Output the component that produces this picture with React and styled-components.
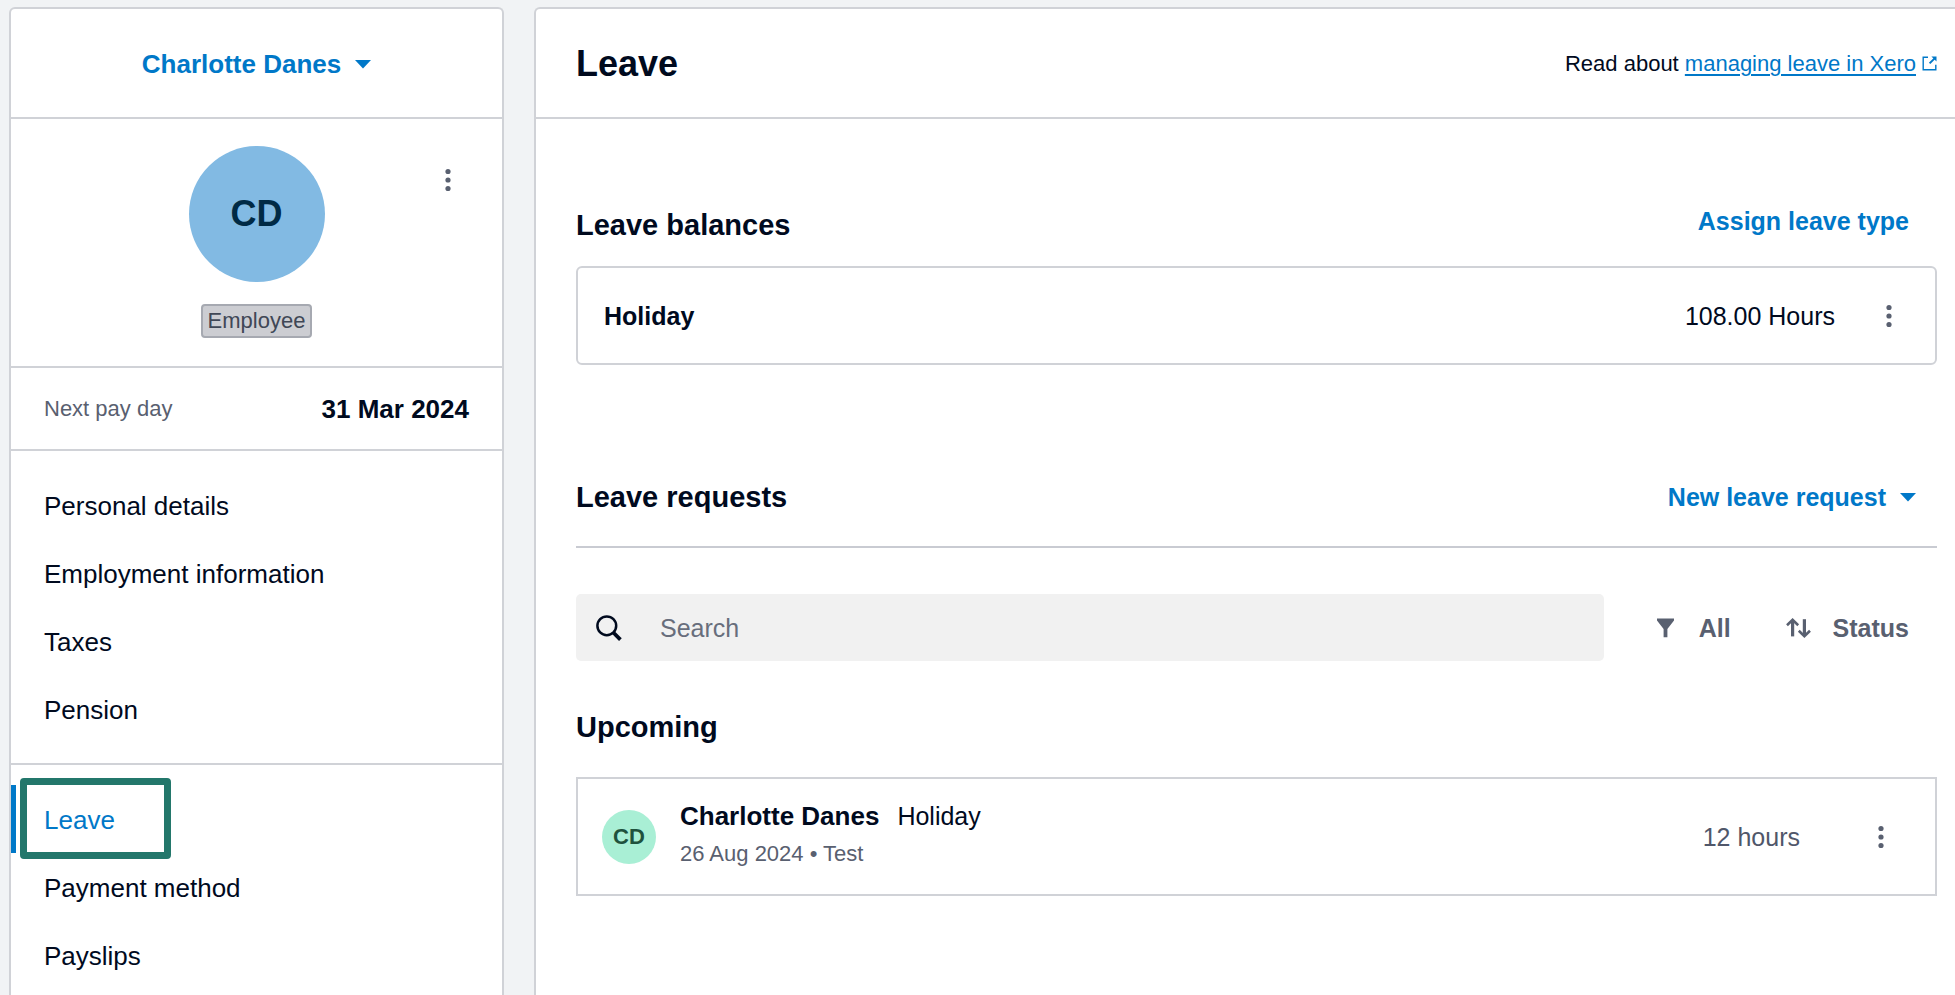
import React from "react";
import styled, { createGlobalStyle, css } from "styled-components";

const color = {
  page: "#f1f3f5",
  ink: "#000a1e",
  muted: "#596070",
  blue: "#0078c8",
  line: "#d0d2d7",
  rule: "#c9cbd2",
  highlight: "#23776b",
};

const GlobalStyle = createGlobalStyle`
  *, *::before, *::after { box-sizing: border-box; }
  body {
    margin: 0;
    background: ${color.page};
    color: ${color.ink};
    font-family: "Liberation Sans", Arial, sans-serif;
    font-size: 26px;
    line-height: 36px;
  }
  h1, h2, p, dl, dd, ul { margin: 0; padding: 0; }
  button, input { font: inherit; color: inherit; }
`;

const Page = styled.div`
  display: flex;
  gap: 30px;
  min-height: 100vh;
  padding: 7px 0 0 9px;
`;

const panel = css`
  background: #fff;
  border: 2px solid ${color.line};
  border-bottom: 0;
`;

const Sidebar = styled.aside`
  ${panel}
  flex: 0 0 495px;
  border-radius: 6px 6px 0 0;
`;

const Main = styled.main`
  ${panel}
  flex: 1;
  min-width: 0;
  border-right: 0;
  border-radius: 6px 0 0 0;
`;

const PanelHeader = styled.header`
  display: flex;
  align-items: center;
  justify-content: ${(p) => (p.$centered ? "center" : "space-between")};
  min-height: 110px;
  padding: ${(p) => (p.$centered ? "2px 0 0" : "2px 18px 0 40px")};
  border-bottom: 2px solid ${color.line};
`;

const PlainButton = styled.button`
  display: inline-flex;
  align-items: center;
  padding: 0;
  border: 0;
  background: none;
  cursor: pointer;
`;

const TextButton = styled(PlainButton)`
  gap: 14px;
  color: ${color.blue};
  font-weight: 700;
  line-height: 32px;
`;

const FilterButton = styled(PlainButton)`
  gap: ${(p) => (p.$wide ? 25 : 22)}px;
  color: ${color.muted};
  font-size: 25px;
  font-weight: 700;
`;

const IconButton = styled(PlainButton)`
  justify-content: center;
  width: 48px;
  height: 48px;
  color: ${color.muted};
`;

const Profile = styled.section`
  display: grid;
  grid-template-columns: 1fr auto 1fr;
  row-gap: 22px;
  padding: 27px 30px 28px;
  border-bottom: 2px solid ${color.line};

  ${IconButton} {
    justify-self: end;
    margin-top: 10px;
  }
`;

const Avatar = styled.div`
  grid-column: ${(p) => (p.$large ? "2" : "auto")};
  display: flex;
  align-items: center;
  justify-content: center;
  flex: none;
  width: ${(p) => (p.$large ? 136 : 54)}px;
  height: ${(p) => (p.$large ? 136 : 54)}px;
  border-radius: 50%;
  background: ${(p) => (p.$large ? "#82bae3" : "#a9efd5")};
  color: ${(p) => (p.$large ? "#002a45" : "#1f523d")};
  font-size: ${(p) => (p.$large ? 36 : 22)}px;
  font-weight: 700;
`;

const Badge = styled.span`
  grid-column: 2;
  justify-self: center;
  padding: 0 5px;
  border: 2px solid #a6a9b1;
  border-radius: 4px;
  background: #cccdd2;
  color: #404756;
  font-size: 22px;
  line-height: 30px;
`;

const PayDay = styled.dl`
  display: flex;
  align-items: center;
  justify-content: space-between;
  min-height: 83px;
  padding: 0 33px;
  border-bottom: 2px solid ${color.line};

  dt { color: ${color.muted}; font-size: 22px; }
  dd { font-weight: 700; }
`;

const NavGroup = styled.ul`
  padding: 20px 0;
  list-style: none;

  & + & { border-top: 2px solid ${color.line}; }
`;

const NavItem = styled.li`
  position: relative;
`;

const NavLink = styled.a`
  display: block;
  padding: 17px 28px 15px;
  border-left: 5px solid ${(p) => (p.$current ? color.blue : "transparent")};
  color: ${(p) => (p.$current ? color.blue : color.ink)};
  text-decoration: none;
`;

const Callout = styled.span`
  position: absolute;
  top: -7px;
  left: 9px;
  width: 151px;
  height: 81px;
  border: 7px solid ${color.highlight};
  border-radius: 4px;
  pointer-events: none;
`;

const Title = styled.h1`
  font-size: 36px;
  line-height: 40px;
`;

const HelpText = styled.p`
  font-size: 22px;
`;

const HelpLink = styled.a`
  color: ${color.blue};
  text-decoration-thickness: 2px;
  text-underline-offset: 3px;

  & + svg { margin-left: 6px; color: ${color.blue}; }
`;

const Content = styled.div`
  padding: 86px 18px 40px 40px;
`;

const Heading = styled.h2`
  font-size: 29px;
  line-height: 40px;
`;

const SectionHeader = styled.div`
  display: flex;
  justify-content: space-between;
  align-items: ${(p) => (p.$ruled ? "center" : "flex-start")};
  padding: ${(p) => (p.$ruled ? "0 21px 29px 0" : "0 28px 21px 0")};
  border-bottom: ${(p) => (p.$ruled ? `2px solid ${color.rule}` : "0")};

  ${TextButton} { font-size: 25px; }
`;

const BalanceCard = styled.div`
  display: flex;
  align-items: center;
  gap: 30px;
  min-height: 99px;
  margin-bottom: 112px;
  padding: 0 22px 0 26px;
  border: 2px solid ${color.line};
  border-radius: 6px;
  font-size: 25px;
`;

const BalanceName = styled.strong`
  flex: 1;
`;

const Toolbar = styled.div`
  display: flex;
  align-items: center;
  gap: 53px;
  margin: 46px 0;
  padding-right: 28px;
`;

const Filters = styled.div`
  display: flex;
  gap: 55px;
`;

const SearchBox = styled.label`
  display: flex;
  align-items: center;
  gap: 38px;
  flex: 1;
  min-width: 0;
  height: 67px;
  padding: 0 20px;
  border-radius: 5px;
  background: #f1f1f1;
  font-size: 25px;
`;

const SearchInput = styled.input`
  flex: 1;
  min-width: 0;
  padding: 0;
  border: 0;
  outline: 0;
  background: none;

  &::placeholder { color: #686e7c; opacity: 1; }
`;

const RequestCard = styled.article`
  display: flex;
  align-items: center;
  min-height: 119px;
  margin-top: 30px;
  padding: 0 30px 0 24px;
  border: 2px solid ${color.line};
`;

const RequestInfo = styled.div`
  flex: 1;
  min-width: 0;
  padding: 0 0 3px 24px;
  line-height: 37px;
`;

const RequestTitle = styled.p`
  display: flex;
  gap: 18px;

  span { font-size: 25px; }
`;

const RequestMeta = styled.p`
  color: ${color.muted};
  font-size: 22px;
`;

const RequestHours = styled.span`
  margin-right: 57px;
  color: #50576a;
  font-size: 25px;
`;

const Caret = () => (
  <svg width="16" height="9" viewBox="0 0 16 9" fill="currentColor" aria-hidden="true">
    <path d="M0 0H16L8 8.6Z" />
  </svg>
);

const Kebab = () => (
  <svg width="6" height="24" viewBox="0 0 6 24" fill="currentColor" aria-hidden="true">
    <circle cx="3" cy="3.5" r="2.6" />
    <circle cx="3" cy="12" r="2.6" />
    <circle cx="3" cy="20.5" r="2.6" />
  </svg>
);

const SearchIcon = () => (
  <svg width="26" height="26" viewBox="0 0 26 26" fill="none" stroke="currentColor" aria-hidden="true">
    <circle cx="10.8" cy="10.8" r="9.4" strokeWidth="2.5" />
    <path d="M16.8 17L24.4 24.6" strokeWidth="3.8" />
  </svg>
);

const FunnelIcon = () => (
  <svg width="17" height="20" viewBox="0 0 17 20" fill="currentColor" aria-hidden="true">
    <path d="M0 0.6H17V2.6L10.4 11V19.2H6.6V11L0 2.6Z" />
  </svg>
);

const SortIcon = () => (
  <svg width="25" height="20" viewBox="0 0 25 20" fill="none" stroke="currentColor" strokeWidth="2.6" aria-hidden="true">
    <path d="M6.6 18.4V2" strokeWidth="3.2" />
    <path d="M1 7.2L6.6 1.8L12.2 7.2" />
    <path d="M18.4 1.2V18" strokeWidth="3.2" />
    <path d="M12.8 12.8L18.4 18.2L24 12.8" />
  </svg>
);

const ExternalIcon = () => (
  <svg width="15" height="15" viewBox="0 0 15 15" fill="none" stroke="currentColor" aria-hidden="true">
    <path d="M6 1.2H1.2V13.8H13.8V8.8" strokeWidth="1.4" />
    <path d="M7.6 7.4L12.4 2.6" strokeWidth="2" />
    <path d="M9.4 0.5H14.5V5.6Z" fill="currentColor" stroke="none" />
  </svg>
);

const MoreButton = ({ label }) => (
  <IconButton type="button" aria-label={label}>
    <Kebab />
  </IconButton>
);

const navGroups = [
  ["Personal details", "Employment information", "Taxes", "Pension"],
  ["Leave", "Payment method", "Payslips"],
];

export default function App() {
  return (
    <>
      <GlobalStyle />
      <Page>
        <Sidebar>
          <PanelHeader $centered>
            <TextButton type="button">
              Charlotte Danes
              <Caret />
            </TextButton>
          </PanelHeader>
          <Profile>
            <Avatar $large>CD</Avatar>
            <MoreButton label="Employee options" />
            <Badge>Employee</Badge>
          </Profile>
          <PayDay>
            <dt>Next pay day</dt>
            <dd>31 Mar 2024</dd>
          </PayDay>
          <nav>
            {navGroups.map((items) => (
              <NavGroup key={items[0]}>
                {items.map((item) => {
                  const current = item === "Leave";
                  return (
                    <NavItem key={item}>
                      <NavLink href="#" $current={current} aria-current={current ? "page" : undefined}>
                        {item}
                      </NavLink>
                      {current && <Callout />}
                    </NavItem>
                  );
                })}
              </NavGroup>
            ))}
          </nav>
        </Sidebar>

        <Main>
          <PanelHeader>
            <Title>Leave</Title>
            <HelpText>
              Read about <HelpLink href="#">managing leave in Xero</HelpLink>
              <ExternalIcon />
            </HelpText>
          </PanelHeader>
          <Content>
            <SectionHeader>
              <Heading>Leave balances</Heading>
              <TextButton type="button">Assign leave type</TextButton>
            </SectionHeader>
            <BalanceCard>
              <BalanceName>Holiday</BalanceName>
              <span>108.00 Hours</span>
              <MoreButton label="Holiday balance options" />
            </BalanceCard>

            <SectionHeader $ruled>
              <Heading>Leave requests</Heading>
              <TextButton type="button">
                New leave request
                <Caret />
              </TextButton>
            </SectionHeader>
            <Toolbar>
              <SearchBox>
                <SearchIcon />
                <SearchInput type="text" placeholder="Search" aria-label="Search" />
              </SearchBox>
              <Filters>
                <FilterButton type="button" $wide>
                  <FunnelIcon />
                  All
                </FilterButton>
                <FilterButton type="button">
                  <SortIcon />
                  Status
                </FilterButton>
              </Filters>
            </Toolbar>

            <Heading>Upcoming</Heading>
            <RequestCard>
              <Avatar>CD</Avatar>
              <RequestInfo>
                <RequestTitle>
                  <strong>Charlotte Danes</strong>
                  <span>Holiday</span>
                </RequestTitle>
                <RequestMeta>26 Aug 2024 • Test</RequestMeta>
              </RequestInfo>
              <RequestHours>12 hours</RequestHours>
              <MoreButton label="Leave request options" />
            </RequestCard>
          </Content>
        </Main>
      </Page>
    </>
  );
}
